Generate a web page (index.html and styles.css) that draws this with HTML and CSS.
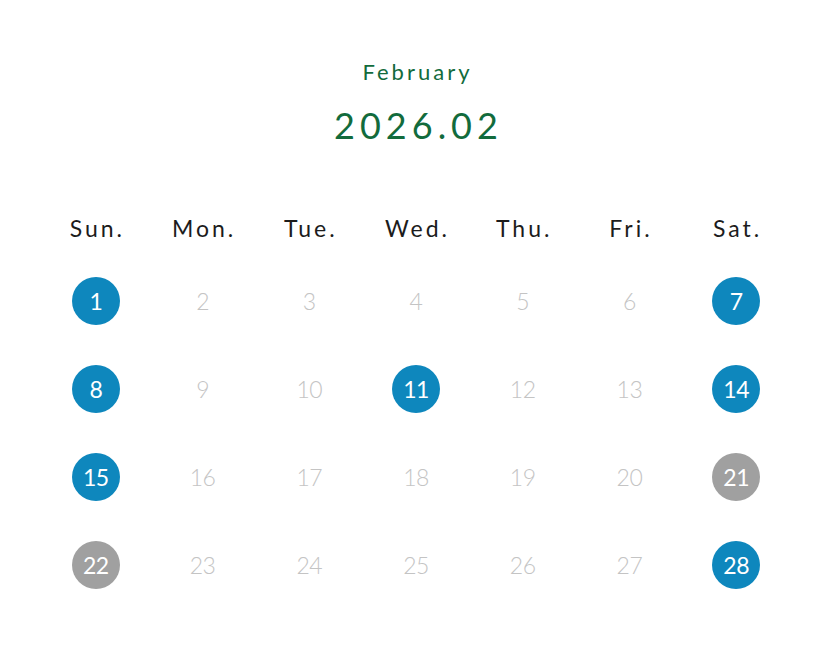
FILE: index.html
```html
<!DOCTYPE html>
<html lang="en">
<head>
<meta charset="utf-8">
<title>Calendar</title>
<link rel="stylesheet" href="styles.css">
</head>
<body>
<main class="calendar">
  <header class="cal-head">
    <p class="month">February</p>
    <h1 class="ym">2026.02</h1>
  </header>
  <div class="grid">
    <div class="wd">Sun.</div><div class="wd">Mon.</div><div class="wd">Tue.</div><div class="wd">Wed.</div><div class="wd">Thu.</div><div class="wd">Fri.</div><div class="wd">Sat.</div>
    <div class="day"><span class="num on">1</span></div>
    <div class="day"><span class="num">2</span></div>
    <div class="day"><span class="num">3</span></div>
    <div class="day"><span class="num">4</span></div>
    <div class="day"><span class="num">5</span></div>
    <div class="day"><span class="num">6</span></div>
    <div class="day"><span class="num on">7</span></div>
    <div class="day"><span class="num on">8</span></div>
    <div class="day"><span class="num">9</span></div>
    <div class="day"><span class="num">10</span></div>
    <div class="day"><span class="num on">11</span></div>
    <div class="day"><span class="num">12</span></div>
    <div class="day"><span class="num">13</span></div>
    <div class="day"><span class="num on">14</span></div>
    <div class="day"><span class="num on">15</span></div>
    <div class="day"><span class="num">16</span></div>
    <div class="day"><span class="num">17</span></div>
    <div class="day"><span class="num">18</span></div>
    <div class="day"><span class="num">19</span></div>
    <div class="day"><span class="num">20</span></div>
    <div class="day"><span class="num off">21</span></div>
    <div class="day"><span class="num off">22</span></div>
    <div class="day"><span class="num">23</span></div>
    <div class="day"><span class="num">24</span></div>
    <div class="day"><span class="num">25</span></div>
    <div class="day"><span class="num">26</span></div>
    <div class="day"><span class="num">27</span></div>
    <div class="day"><span class="num on">28</span></div>
  </div>
</main>
</body>
</html>
```
FILE: styles.css
```css
html, body {
  margin: 0;
  padding: 0;
  background: #ffffff;
}
body {
  font-family: "Lato", "Open Sans", sans-serif;
}
.calendar {
  width: 747px;
  margin: 0 auto;
  padding-top: 56px;
}
.cal-head {
  text-align: center;
  color: #126b3c;
}
.month {
  margin: 0;
  font-size: 22px;
  line-height: 32px;
  letter-spacing: 3px;
  font-weight: 400;
  padding-left: 3px;
}
.ym {
  margin: 17px 0 0;
  font-size: 36px;
  line-height: 40px;
  letter-spacing: 5px;
  font-weight: 400;
  padding-left: 5px;
}
.grid {
  margin-top: 54px;
  display: grid;
  grid-template-columns: repeat(7, 1fr);
  grid-template-rows: 58px repeat(4, 88px);
}
.wd {
  display: flex;
  align-items: center;
  justify-content: center;
  font-size: 23px;
  letter-spacing: 3px;
  color: #1c1c1c;
  padding-left: 3px;
}
.day {
  display: flex;
  align-items: center;
  justify-content: center;
}
.num {
  width: 48px;
  height: 48px;
  border-radius: 50%;
  display: flex;
  align-items: center;
  justify-content: center;
  font-size: 23px;
  font-weight: 300;
  color: #c4c4c4;
  letter-spacing: -0.5px;
}
.num.on {
  background: #0e87bd;
  color: #ffffff;
  font-weight: 400;
}
.num.off {
  background: #a0a0a0;
  color: #ffffff;
  font-weight: 400;
}
```
